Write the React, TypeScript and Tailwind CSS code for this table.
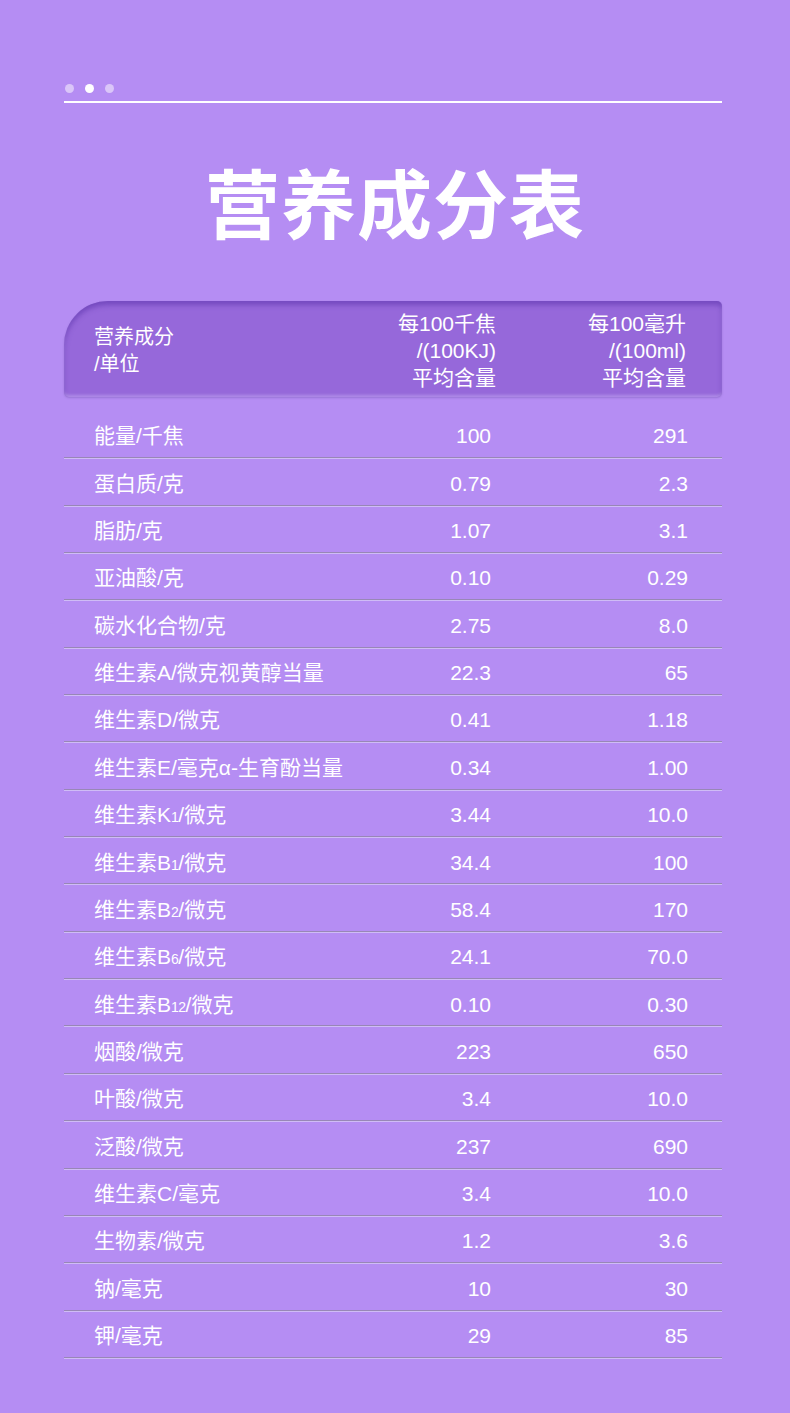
import React from "react";

const font = { fontFamily: '"Liberation Sans", "Noto Sans CJK SC", sans-serif' };

type Row = { label: React.ReactNode; a: string; b: string };

const Sub = ({ children }: { children: React.ReactNode }) => (
  <span className="text-[14px] tracking-[-0.5px]">{children}</span>
);

const rows: Row[] = [
  { label: "能量/千焦", a: "100", b: "291" },
  { label: "蛋白质/克", a: "0.79", b: "2.3" },
  { label: "脂肪/克", a: "1.07", b: "3.1" },
  { label: "亚油酸/克", a: "0.10", b: "0.29" },
  { label: "碳水化合物/克", a: "2.75", b: "8.0" },
  { label: "维生素A/微克视黄醇当量", a: "22.3", b: "65" },
  { label: "维生素D/微克", a: "0.41", b: "1.18" },
  { label: "维生素E/毫克α-生育酚当量", a: "0.34", b: "1.00" },
  { label: <>维生素K<Sub>1</Sub>/微克</>, a: "3.44", b: "10.0" },
  { label: <>维生素B<Sub>1</Sub>/微克</>, a: "34.4", b: "100" },
  { label: <>维生素B<Sub>2</Sub>/微克</>, a: "58.4", b: "170" },
  { label: <>维生素B<Sub>6</Sub>/微克</>, a: "24.1", b: "70.0" },
  { label: <>维生素B<Sub>12</Sub>/微克</>, a: "0.10", b: "0.30" },
  { label: "烟酸/微克", a: "223", b: "650" },
  { label: "叶酸/微克", a: "3.4", b: "10.0" },
  { label: "泛酸/微克", a: "237", b: "690" },
  { label: "维生素C/毫克", a: "3.4", b: "10.0" },
  { label: "生物素/微克", a: "1.2", b: "3.6" },
  { label: "钠/毫克", a: "10", b: "30" },
  { label: "钾/毫克", a: "29", b: "85" },
];

export default function App() {
  return (
    <div className="w-[790px] h-[1413px] bg-[#b58df3] text-white overflow-hidden" style={font}>
      <div className="ml-[64px] w-[658px] pt-[83px]">
        {/* dots + rule */}
        <div className="flex items-center gap-[11px] pl-[1px] h-[10px]">
          <span className="w-[9px] h-[9px] rounded-full bg-[#dac6f8]" />
          <span className="w-[9px] h-[9px] rounded-full bg-white" />
          <span className="w-[9px] h-[9px] rounded-full bg-[#dac6f8]" />
        </div>
        <div className="mt-[8px] h-[2px] bg-white" />

        <h1 className="mt-[67px] pl-[4px] text-center text-[75px] leading-none font-bold tracking-[1px]">
          营养成分表
        </h1>

        {/* table header */}
        <div className="mt-[56px] h-[96px] flex items-center pl-[30px] pr-[36px] bg-[#9668da] rounded-tl-[44px] rounded-tr-[5px] rounded-b-[5px] shadow-[inset_0_4px_5px_rgba(90,50,170,0.55),inset_0_-2px_3px_rgba(210,190,250,0.45),0_1px_2px_rgba(90,60,150,0.3)] leading-[27px]">
          <div className="flex-1 pt-[4px] text-[20px]">
            <div>营养成分</div>
            <div>/单位</div>
          </div>
          <div className="w-[140px] text-right text-[21px] pt-[2px]">
            <div>每100千焦</div>
            <div>/(100KJ)</div>
            <div>平均含量</div>
          </div>
          <div className="w-[190px] text-right text-[21px] pt-[2px]">
            <div>每100毫升</div>
            <div>/(100ml)</div>
            <div>平均含量</div>
          </div>
        </div>

        {/* rows */}
        <div className="mt-[15px]">
          {rows.map((r, i) => (
            <div key={i}>
              <div className="h-[45.35px] flex items-center pl-[30px] pr-[34px] text-[21px] pt-[3px]">
                <div className="flex-1 whitespace-nowrap">{r.label}</div>
                <div className="w-[120px] text-right">{r.a}</div>
                <div className="w-[197px] text-right">{r.b}</div>
              </div>
              <div className="h-[1px] bg-[#9887b6]" />
              <div className="h-[1px] bg-[#cfbcf6]" />
            </div>
          ))}
        </div>
      </div>
    </div>
  );
}
